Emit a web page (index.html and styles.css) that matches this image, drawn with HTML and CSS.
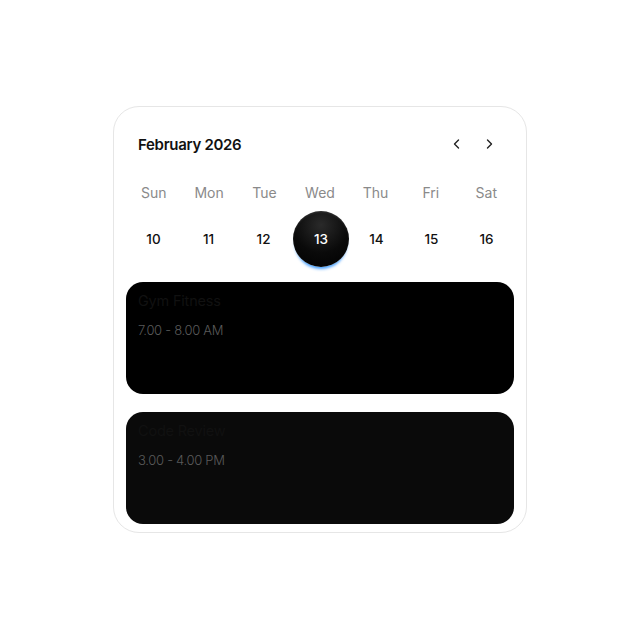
FILE: index.html
```html
<!DOCTYPE html>
<html>
<head>
<meta charset="utf-8">
<link rel="stylesheet" href="styles.css">
</head>
<body>
<div class="page">
  <div class="calendar">
    <div class="header">
      <div class="month">February 2026</div>
      <div class="nav">
        <button class="nav-btn" aria-label="Previous">
          <svg width="12" height="12" viewBox="0 0 12 12"><path d="M7.5 2 L3.5 6 L7.5 10" fill="none" stroke="#222" stroke-width="1.4" stroke-linecap="round" stroke-linejoin="round"/></svg>
        </button>
        <button class="nav-btn" aria-label="Next">
          <svg width="12" height="12" viewBox="0 0 12 12"><path d="M4.5 2 L8.5 6 L4.5 10" fill="none" stroke="#222" stroke-width="1.4" stroke-linecap="round" stroke-linejoin="round"/></svg>
        </button>
      </div>
    </div>
    <div class="week">
      <div class="wd">Sun</div>
      <div class="wd">Mon</div>
      <div class="wd">Tue</div>
      <div class="wd">Wed</div>
      <div class="wd">Thu</div>
      <div class="wd">Fri</div>
      <div class="wd">Sat</div>
    </div>
    <div class="days">
      <div class="day">10</div>
      <div class="day">11</div>
      <div class="day">12</div>
      <div class="day"><span class="selected">13</span></div>
      <div class="day">14</div>
      <div class="day">15</div>
      <div class="day">16</div>
    </div>
    <div class="events">
      <div class="event event-a">
        <div class="event-title">Gym Fitness</div>
        <div class="event-time">7.00 - 8.00 AM</div>
      </div>
      <div class="event event-b">
        <div class="event-title">Code Review</div>
        <div class="event-time">3.00 - 4.00 PM</div>
      </div>
    </div>
  </div>
</div>
</body>
</html>
```

FILE: styles.css
```css
* { box-sizing: border-box; }
html, body { margin: 0; padding: 0; background: #ffffff; }
body { font-family: "Inter", "Noto Sans", sans-serif; }
.page {
  width: 640px;
  height: 640px;
  display: flex;
  align-items: center;
  justify-content: center;
}
.calendar {
  width: 414px;
  height: 427px;
  margin-top: -1px;
  border: 1px solid #e6e6e6;
  border-radius: 26px;
  background: #ffffff;
  padding: 19px 12px 8px 12px;
  display: flex;
  flex-direction: column;
}
.header {
  height: 36px;
  display: flex;
  align-items: center;
  justify-content: space-between;
  padding: 0 12px;
}
.month {
  font-size: 15px;
  font-weight: 600;
  color: #111;
  letter-spacing: -0.3px;
}
.nav { display: flex; gap: 20px; margin-right: 7px; }
.nav-btn {
  width: 12px; height: 12px; padding: 0; border: 0; background: none;
  display: flex; align-items: center; justify-content: center;
}
.week, .days {
  display: grid;
  grid-template-columns: repeat(7, 1fr);
}
.week { margin-top: 20px; height: 20px; align-items: center; }
.wd {
  text-align: center;
  font-size: 14px;
  color: #8a8a8a;
}
.days { margin-top: 9px; height: 56px; align-items: center; }
.day {
  display: flex;
  justify-content: center;
  align-items: center;
  font-size: 13.5px;
  font-weight: 500;
  color: #111;
}
.selected {
  width: 56px;
  height: 56px;
  border-radius: 50%;
  display: flex;
  align-items: center;
  justify-content: center;
  color: #fff;
  background: radial-gradient(circle at 50% 25%, #2a2a2a 0%, #0a0a0a 55%, #000 100%);
  box-shadow: 0 4px 3px -2px rgba(50, 150, 255, 0.9), inset 0 1px 2px rgba(255,255,255,0.12);
  margin-left: 2px;
}
.events {
  margin-top: 15px;
  display: flex;
  flex-direction: column;
  gap: 18px;
}
.event {
  height: 112px;
  border-radius: 17px;
  padding: 9px 12px;
}
.event-a { background: #000000; }
.event-b { background: #0a0a0a; }
.event-title {
  font-size: 14.5px;
  color: #111111;
  line-height: 20px;
  letter-spacing: -0.2px;
}
.event-time {
  margin-top: 9px;
  font-size: 13px;
  font-weight: 300;
  color: #5a5a5a;
  line-height: 20px;
  letter-spacing: -0.3px;
}
```
